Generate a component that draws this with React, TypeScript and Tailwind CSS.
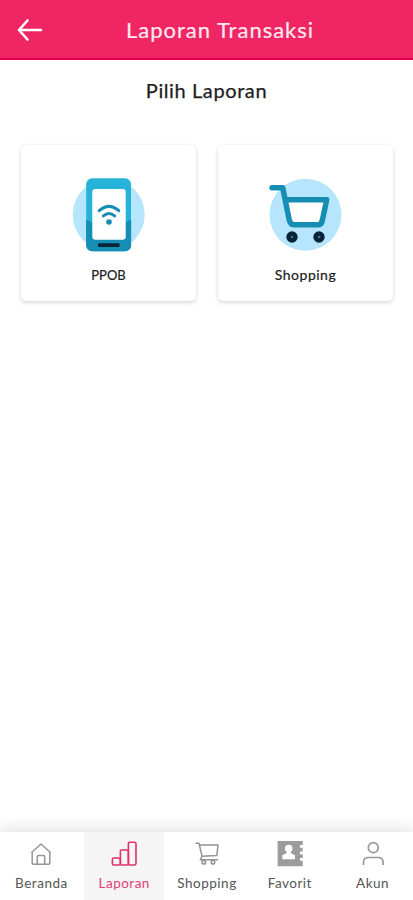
import type { ReactNode } from "react";

function PhoneArt() {
  return (
    <svg width="80" height="80" viewBox="0 0 80 80">
      <circle cx="39.7" cy="39.7" r="36" fill="#b5e6fd" />
      <rect x="17.2" y="3.2" width="44.8" height="73" rx="6" fill="#27b2da" />
      <path d="M17.2 45q3 0 6 3h33q3-3 6-3v25.2a6 6 0 0 1-6 6H23.2a6 6 0 0 1-6-6z" fill="#168db3" />
      <rect x="23.3" y="14" width="33.4" height="50.7" rx="3" fill="#fff" />
      <g fill="none" stroke="#168db3" strokeWidth="3" strokeLinecap="round">
        <path d="M30.2 35.700q9.800-8.600 19.600 0" />
        <path d="M34.400 40.900q5.600-4.800 11.200 0" />
      </g>
      <circle cx="40" cy="47" r="2.800" fill="#168db3" />
      <rect x="29" y="68.300" width="21.500" height="3.800" rx="1" fill="#062638" />
    </svg>
  );
}

function CartArt() {
  return (
    <svg width="80" height="80" viewBox="1 0 80 80">
      <circle cx="40.5" cy="39.7" r="36" fill="#b5e6fd" />
      <path d="M20.5 25.7H61.5L56.3 49.8H26z" fill="#fff" />
      <path
        d="M7 12.700H17.700L24.200 44.800Q25.200 49.700 29 49.700H53Q56.300 49.700 57.200 46L61.700 24.700H20.500"
        fill="none"
        stroke="#168db3"
        strokeWidth="5.500"
        strokeLinecap="round"
        strokeLinejoin="round"
      />
      {[27, 54].map((x) => (
        <g key={x}>
          <circle cx={x} cy="62" r="5.700" fill="#062638" />
          <circle cx={x} cy="62" r="1.300" fill="#477080" />
        </g>
      ))}
    </svg>
  );
}

function HomeIcon() {
  return (
    <svg width="28" height="28" viewBox="0 0 28 28" fill="none" stroke="#969696" strokeWidth="1.500" strokeLinejoin="round">
      <path d="M4.300 12.800L14 4L23.700 12.800M5.200 12V23Q5.200 24.200 6.500 24.200H21.500Q22.800 24.200 22.800 23V12M10.200 24.200V17Q10.200 15.500 11.700 15.500H16.200Q17.700 15.500 17.700 17V24.200" />
    </svg>
  );
}

function BarsIcon() {
  return (
    <svg width="28" height="28" viewBox="0 0 28 28" fill="none" stroke="#df3268" strokeWidth="1.600">
      <rect x="2.400" y="18" width="8" height="7" rx="1.500" />
      <rect x="10.400" y="10" width="8" height="15" rx="1" />
      <rect x="18.400" y="2.300" width="7.600" height="22.700" rx="1.500" />
    </svg>
  );
}

function CartIcon() {
  return (
    <svg width="28" height="28" viewBox="0 0 28 28" fill="none" stroke="#929292" strokeWidth="1.500" strokeLinecap="round" strokeLinejoin="round">
      <path d="M3 3.200H6L9 16.200L7.300 19.800H24.500M6.600 5H25L23.800 15.500L9 16.200" />
      <circle cx="10.800" cy="22.300" r="1.800" />
      <circle cx="20" cy="22.300" r="1.800" />
    </svg>
  );
}

function ContactIcon() {
  return (
    <svg width="28" height="28" viewBox="0 0 28 28">
      <path d="M1.600 1H26.700V5H24V7.700H26.700V11.500H24V14.300H26.700V18H24V20.700H26.700V26.200H1.600z" fill="#9c9c9c" />
      <circle cx="12.700" cy="8.500" r="3.800" fill="#fff" />
      <path d="M10.800 10H14.600V13L19 15.200V19.300H6.300V15.200L10.800 13z" fill="#fff" />
    </svg>
  );
}

function PersonIcon() {
  return (
    <svg width="28" height="28" viewBox="0 0 28 28" fill="none" stroke="#989898" strokeWidth="1.700">
      <circle cx="14.300" cy="7.700" r="5" />
      <path d="M4.500 25V22.500Q4.500 17.500 9.500 17.500H19.100Q24.100 17.500 24.100 22.500V25" />
    </svg>
  );
}

function ReportCard({ art, children }: { art: ReactNode; children: ReactNode }) {
  return (
    <button className="flex h-[156px] w-[175px] flex-col items-center rounded-[5px] bg-white pt-[30px] shadow-[0_2px_4px_rgba(0,0,0,0.13),0_0_3px_rgba(0,0,0,0.06)]">
      {art}
      <span className="mt-[10px] whitespace-nowrap leading-[18px] text-[#202020]">{children}</span>
    </button>
  );
}

function Tab({ icon, active = false, children }: { icon: ReactNode; active?: boolean; children: ReactNode }) {
  return (
    <button className={`mx-[1.5px] flex min-w-0 flex-1 flex-col items-center pt-[8px] ${active ? "bg-[#f5f5f5] text-[#e23e74]" : "text-[#555]"}`}>
      {icon}
      <span className="mt-[6px] whitespace-nowrap leading-[18px]">{children}</span>
    </button>
  );
}

export default function App() {
  return (
    <div className="flex h-[900px] w-[413px] flex-col overflow-hidden bg-white font-['Lato','Noto_Sans',sans-serif]">
      <header className="flex h-[60px] shrink-0 items-center border-b-2 border-[#e00050] bg-[#f02664] pl-[17px] pt-[2px]">
        <svg width="27" height="24" viewBox="0 0 27 24" fill="none" stroke="#fff" strokeWidth="2.600" strokeLinecap="round" strokeLinejoin="round">
          <path d="M10.500 2.500L2 12L10.500 21.500M2 12H24" />
        </svg>
        <h1 className="ml-[82px] whitespace-nowrap text-[22px] leading-[28px] tracking-[1px] text-[#ffe8ef] [-webkit-text-stroke:0.2px]">Laporan Transaksi</h1>
      </header>
      <main className="flex-1">
        <h2 className="mt-[16px] text-center text-[20px] font-normal leading-[28px] tracking-[0.6px] text-[#202020] [-webkit-text-stroke:0.25px]">Pilih Laporan</h2>
        <div className="mt-[41px] flex justify-between pl-[21px] pr-[20px]">
          <ReportCard art={<PhoneArt />}>
            <span className="text-[13px] [-webkit-text-stroke:0.2px]">PPOB</span>
          </ReportCard>
          <ReportCard art={<CartArt />}>
            <span className="text-[14px] tracking-[0.5px] [-webkit-text-stroke:0.2px]">Shopping</span>
          </ReportCard>
        </div>
      </main>
      <nav className="flex h-[68px] w-[414px] shrink-0 bg-white text-[13.5px] tracking-[0.5px] shadow-[0_-4px_14px_rgba(0,0,0,0.11)]">
        <Tab icon={<HomeIcon />}>Beranda</Tab>
        <Tab icon={<BarsIcon />} active>Laporan</Tab>
        <Tab icon={<CartIcon />}>Shopping</Tab>
        <Tab icon={<ContactIcon />}>Favorit</Tab>
        <Tab icon={<PersonIcon />}>Akun</Tab>
      </nav>
    </div>
  );
}
